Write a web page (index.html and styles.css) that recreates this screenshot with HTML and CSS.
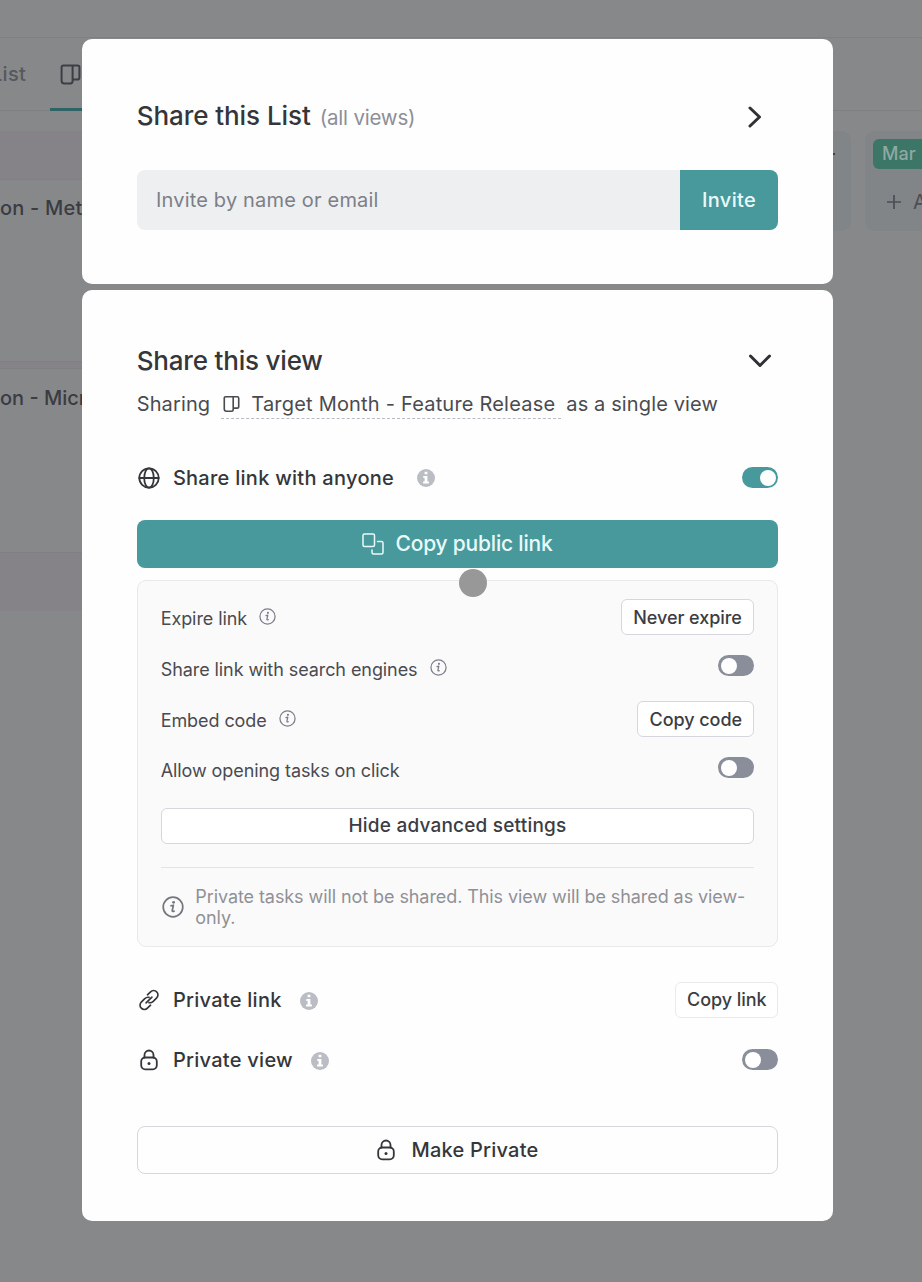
FILE: index.html
```
<!DOCTYPE html>
<html lang="en">
<head>
<meta charset="utf-8">
<title>Share this view</title>
<link rel="stylesheet" href="styles.css">
</head>
<body>
<svg class="defs" aria-hidden="true">
  <symbol id="board" viewBox="0 0 20 20"><path d="M3.200 1.500h13.600q1.700 0 1.700 1.700v9.600q0 2-2 2H12v1.700q0 2-2 2H4q-2.500 0-2.500-2.500V3.200Q1.500 1.500 3.200 1.500zM12 1.500v13.300"/></symbol>
  <symbol id="lock" viewBox="0 0 20 22"><rect x="2.200" y="8.500" width="15.600" height="11.800" rx="4"/><path d="M5.500 8.500V6a4.500 4.500 0 0 1 9 0v2.500"/><circle class="fill" cx="10" cy="14.400" r="1.500"/></symbol>
  <symbol id="info-solid" viewBox="0 0 18 18"><circle class="disc" cx="9" cy="9" r="9"/><path class="mark" d="M7.600 2.800h2.800v2.500H7.600zM6.300 7h4.100v5.500h1.500v2H6.100v-2h1.500V9H6.300z"/></symbol>
  <symbol id="info-line" viewBox="0 0 22 22"><circle cx="11" cy="11" r="9.800"/><path d="M9 9.800l2.400-.6-1.200 5.600q-.2 1 1.900.4"/><circle class="fill" cx="11.600" cy="6.300" r="1.400"/></symbol>
</svg>

<div class="board">
  <div class="topbar"></div>
  <nav class="tabs">
    <span class="tab">List</span>
    <span class="tab tab-active"><svg class="ico20"><use href="#board"/></svg></span>
  </nav>
  <div class="columns">
    <div class="column lilac">
      <div class="task first">on - Met</div>
      <div class="task second">on - Micr</div>
    </div>
    <div class="column mist mid"><i class="dash"></i></div>
    <div class="column mist last">
      <span class="month">Mar</span>
      <span class="add"><svg viewBox="0 0 16 16"><path d="M8 1v14M1 8h14"/></svg>A</span>
    </div>
  </div>
</div>

<main class="modal">
  <section class="card list-card">
    <header class="head">
      <h2 class="title t-list">Share this List</h2><span class="sub">(all views)</span>
      <svg class="chev right" viewBox="0 0 14 22"><path d="M2 2l9.500 9L2 20"/></svg>
    </header>
    <div class="invite"><span class="field">Invite by name or email</span><span class="send">Invite</span></div>
  </section>

  <section class="card view-card">
    <header class="head">
      <h2 class="title t-view">Share this view</h2>
      <svg class="chev down" viewBox="0 0 22 14"><path d="M1.500 2l9.500 9.500L20.500 2"/></svg>
    </header>
    <p class="sharing">Sharing
      <span class="target"><svg class="ico18"><use href="#board"/></svg><span>Target Month - Feature Release</span></span>
      <span>as a single view</span></p>

    <div class="row anyone">
      <svg class="lead" viewBox="0 0 22 22"><circle cx="11" cy="11" r="9.700"/><ellipse cx="11" cy="11" rx="4.800" ry="9.700"/><path d="M1.300 11h19.400"/></svg>
      <span class="name">Share link with anyone</span>
      <svg class="hint"><use href="#info-solid"/></svg>
      <span class="toggle on"></span>
    </div>

    <div class="copy">
      <svg viewBox="0 0 22 22"><rect x="1" y="1" width="11.500" height="12.500" rx="1.500"/><path d="M15.500 8.500h4q1.500 0 1.500 1.500v9.500q0 1.500-1.500 1.500H11.500q-1.500 0-1.500-1.500v-2.500"/></svg>
      Copy public link
      <i class="pointer"></i>
    </div>

    <div class="panel">
      <div class="setting"><span>Expire link</span><svg class="note-ico"><use href="#info-line"/></svg><span class="btn b-expire">Never expire</span></div>
      <div class="setting"><span>Share link with search engines</span><svg class="note-ico"><use href="#info-line"/></svg><span class="toggle"></span></div>
      <div class="setting"><span>Embed code</span><svg class="note-ico"><use href="#info-line"/></svg><span class="btn b-code">Copy code</span></div>
      <div class="setting"><span>Allow opening tasks on click</span><span class="toggle"></span></div>
      <div class="hide">Hide advanced settings</div>
      <div class="notice"><svg><use href="#info-line"/></svg><p>Private tasks will not be shared. This view will be shared as view-<br>only.</p></div>
    </div>

    <div class="row plink">
      <svg class="lead" viewBox="0 0 24 24"><path d="M10.300 6.300l3.400-3.200a4.600 4.600 0 0 1 6.700 0 4.600 4.600 0 0 1 0 6.600l-3.800 3.800q-2.200 2-4.600 1.400M13.700 17.700l-3.400 3.200a4.600 4.600 0 0 1-6.700 0 4.600 4.600 0 0 1 0-6.600l3.800-3.800q2.200-2 4.600-1.400M8.800 15.200l6.400-6.400"/></svg>
      <span class="name">Private link</span>
      <svg class="hint"><use href="#info-solid"/></svg>
      <span class="btn b-link">Copy link</span>
    </div>
    <div class="row pview">
      <svg class="lead"><use href="#lock"/></svg>
      <span class="name">Private view</span>
      <svg class="hint"><use href="#info-solid"/></svg>
      <span class="toggle"></span>
    </div>
    <div class="private"><svg><use href="#lock"/></svg>Make Private</div>
  </section>
</main>
</body>
</html>
```
FILE: styles.css
```
* { box-sizing: border-box; margin: 0; padding: 0; }
body { position: relative; width: 922px; height: 1282px; overflow: hidden; background: #87888a; color: #35363a; font-family: Inter, "Liberation Sans", sans-serif; }
svg { display: block; flex: none; fill: none; stroke: currentColor; stroke-width: 1.7; stroke-linecap: round; stroke-linejoin: round; }
.defs { position: absolute; width: 0; height: 0; }
.fill { fill: currentColor; stroke: none; }

/* dimmed board */
.board { height: 1282px; overflow: hidden; color: #3b3c41; }
.topbar { height: 38px; border-bottom: 1px solid #7e8084; }
.tabs { display: flex; height: 73px; border-bottom: 1px solid #7e8084; font-size: 20px; font-weight: 500; }
.tab { line-height: 73px; width: 50px; margin-left: -9px; color: #55585f; letter-spacing: .3px; }
.tab-active { display: flex; align-items: center; width: 110px; margin-left: 9px; padding-left: 10px; height: 73px; border-bottom: 3px solid #2f6467; color: #3c3e44; }
.ico20 { width: 21px; height: 21px; margin-top: 3px; stroke-width: 1.9; }
.columns { display: flex; align-items: flex-start; margin-top: 20px; width: 1000px; }
.column { flex: none; border-radius: 9px; }
.lilac { width: 342px; height: 480px; padding-top: 48px; background: #858388; border-radius: 0; }
.mist { background: #818588; height: 100px; }
.mid { width: 300px; margin-left: 209px; padding: 22px 16px; }
.dash { display: block; width: 6px; height: 2px; margin-left: 262px; background: #3f4146; }
.last { width: 135px; margin-left: 14px; padding: 8px; }
.task { height: 183px; padding-top: 16px; line-height: 24px; background: #87888a; border: solid #7f7f84; border-width: 1px 0; font-size: 20px; font-weight: 500; letter-spacing: .2px; }
.second { margin-top: 6px; padding-top: 17px; height: 185px; letter-spacing: 0; }
.month { display: block; width: 120px; height: 30px; padding-left: 9px; border-radius: 6px; background: #3c7666; color: #8ea9a2; font-size: 18px; line-height: 30px; font-weight: 500; }
.add { display: flex; align-items: center; gap: 11px; height: 24px; margin: 21px 0 0 13px; font-size: 20px; color: #4b4e55; }
.add svg { width: 16px; height: 16px; stroke-linecap: butt; }

/* share dialog */
.modal { position: absolute; left: 82.4px; top: 39px; width: 750.2px; display: flex; flex-direction: column; gap: 6px; }
.card { padding: 0 54.3px; background: #fefefe; border-radius: 10px; }
.list-card { height: 245.400px; padding-top: 57px; }
.view-card { height: 931px; padding-top: 50.300px; }
.head { display: flex; align-items: center; height: 40px; }
.title { font-size: 26px; line-height: 32px; font-weight: 500; }
.t-list { letter-spacing: -.07px; }
.t-view { letter-spacing: -.19px; }
.sub { margin: 3px 0 0 9px; font-size: 20.500px; letter-spacing: -.2px; color: #8c8f98; }
.chev { margin-left: auto; stroke-width: 3; color: #303136; }
.right { width: 14px; height: 22px; margin: 1px 16.500px 0 auto; }
.down { width: 22px; height: 14px; margin: 1px 7px 0 auto; }
.invite { display: flex; height: 60px; margin-top: 34.200px; border-radius: 8px; overflow: hidden; line-height: 60px; font-size: 20px; }
.field { flex: 1; padding-left: 19.300px; background: #eeeff1; color: #7c7f88; letter-spacing: .18px; }
.send { width: 98.500px; text-align: center; background: #47999c; color: #e9fafa; font-weight: 500; letter-spacing: .3px; }
.sharing { display: flex; align-items: center; height: 46px; font-size: 20px; color: #4a4b50; letter-spacing: .13px; }
.target { display: flex; align-items: center; height: 31px; margin: 0 5px 0 11px; padding: 1px 6px 0 2px; border-bottom: 1.500px dashed #b9bac4; letter-spacing: .2px; }
.ico18 { width: 17px; height: 18px; margin-right: 11px; stroke-width: 1.9; }
.row { display: flex; align-items: center; }
.anyone { height: 60px; margin-top: 21px; }
.lead { width: 22px; height: 22px; margin: 0 13.200px 0 1px; stroke-width: 1.8; }
.name { font-size: 20px; font-weight: 500; letter-spacing: .27px; }
.hint { width: 18px; height: 18px; margin-left: 22.700px; }
.plink .hint, .pview .hint { margin: 2px 0 0 18.500px; }
.disc { fill: #bbbdc5; stroke: none; }
.mark { fill: #fff; stroke: none; }
.toggle { flex: none; width: 36px; height: 21px; margin-left: auto; padding: 2.500px; border-radius: 11px; background: #8a8e9a; }
.toggle::before { content: ""; display: block; width: 16px; height: 16px; border-radius: 50%; background: #fff; }
.on { background: #47999c; }
.on::before { margin-left: 15px; }
.copy { position: relative; display: flex; align-items: center; justify-content: center; gap: 11px; height: 48px; margin-top: 12px; border-radius: 8px; background: #47999c; color: #e9fafa; font-size: 21px; font-weight: 500; letter-spacing: -.2px; }
.copy svg { width: 22px; height: 22px; stroke-width: 1.5; }
.pointer { position: absolute; left: 322.500px; top: 49.700px; width: 28px; height: 28px; border-radius: 50%; background: #989899; }
.panel { height: 367px; margin-top: 12px; padding: 11px 23px 0; border: 1.500px solid #e8e9ed; border-radius: 9px; background: #fafafb; }
.setting { display: flex; align-items: center; height: 51px; font-size: 18px; letter-spacing: -.08px; color: #4a4b50; }
.setting > span:first-child { padding-top: 2px; }
.setting:nth-child(4) > span:first-child { padding-top: 0; }
.note-ico { width: 17px; height: 17px; margin: -2px 0 0 12px; stroke-width: 1.6; color: #7b7e8a; }
.btn { display: flex; align-items: center; justify-content: center; height: 36px; margin-left: auto; border: 1.500px solid #d6d7dd; border-radius: 6px; background: #fff; color: #3c3d42; font-size: 18px; font-weight: 500; letter-spacing: -.05px; }
.b-expire { width: 133.500px; }
.b-code { width: 117px; }
.b-link { width: 103px; border-color: #e9eaee; }
.setting .toggle { margin-bottom: 5px; }
.hide { display: flex; align-items: center; justify-content: center; height: 36px; margin-top: 12px; border: 1.500px solid #d6d7dd; border-radius: 6px; background: #fff; font-size: 19px; font-weight: 500; letter-spacing: .2px; color: #3c3d42; }
.notice { display: flex; align-items: center; height: 80px; margin-top: 23px; border-top: 1px solid #e3e4e8; color: #909196; font-size: 18px; line-height: 21px; letter-spacing: -.08px; white-space: nowrap; }
.notice svg { width: 22px; height: 22px; margin: 0 11.600px 0 1px; color: #75777f; }
.plink { height: 60px; margin-top: 23px; }
.pview { height: 60px; }
.private { display: flex; align-items: center; justify-content: center; gap: 15px; height: 48px; margin-top: 36px; border: 1.500px solid #d6d7dd; border-radius: 8px; font-size: 20px; font-weight: 500; letter-spacing: .22px; }
.private svg { width: 20px; height: 22px; stroke-width: 1.8; }
```
